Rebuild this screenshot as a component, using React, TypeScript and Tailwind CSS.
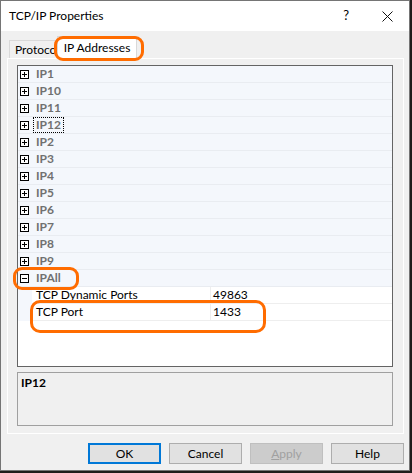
const categories = ["IP1", "IP10", "IP11", "IP12", "IP2", "IP3", "IP4", "IP5", "IP6", "IP7", "IP8", "IP9"];

const props = [
  { name: "TCP Dynamic Ports", value: "49863" },
  { name: "TCP Port", value: "1433" },
];

function ExpandBox({ open }: { open?: boolean }) {
  return (
    <svg width="9" height="9" viewBox="0 0 9 9" className="shrink-0">
      <rect x="0.5" y="0.5" width="8" height="8" fill="white" stroke="#000" />
      <line x1="2" y1="4.5" x2="7" y2="4.5" stroke="#000" />
      {!open && <line x1="4.5" y1="2" x2="4.5" y2="7" stroke="#000" />}
    </svg>
  );
}

function CategoryRow({ label, open, focused }: { label: string; open?: boolean; focused?: boolean }) {
  return (
    <div className="h-[17px] flex items-center bg-[#f4f7fc] border-b border-[#e9ecf1]">
      <div className="w-[14px] pl-[2px] flex items-center">
        <ExpandBox open={open} />
      </div>
      <span
        className={
          "ml-[1px] px-[2px] leading-[14px] font-bold text-[#707070] border " +
          (focused ? "border-dotted border-black" : "border-transparent")
        }
      >
        {label}
      </span>
    </div>
  );
}

function PropRow({ name, value }: { name: string; value: string }) {
  return (
    <div className="h-[17px] flex">
      <div className="w-[14px] bg-[#f4f7fc]" />
      <div className="flex-1 flex border-b border-[#eeeeee]">
        <div className="w-[179px] pl-[4px] border-r border-[#eeeeee] leading-[16px] text-black">{name}</div>
        <div className="pl-[2px] leading-[16px] text-black">{value}</div>
      </div>
    </div>
  );
}

function Button({ label, primary, disabled }: { label: React.ReactNode; primary?: boolean; disabled?: boolean }) {
  return (
    <div
      className={
        "w-[73px] h-[21px] flex items-center justify-center " +
        (primary
          ? "border-2 border-[#0078d7] bg-[#e1e1e1] text-black"
          : disabled
          ? "border border-[#bfbfbf] bg-[#cccccc] text-[#a0a0a0]"
          : "border border-[#adadad] bg-[#e1e1e1] text-black")
      }
    >
      {label}
    </div>
  );
}

export default function App() {
  return (
    <div
      className="relative w-[412px] h-[473px] bg-[#1f1d1c] overflow-hidden text-[12px]"
      style={{ fontFamily: '"Segoe UI", Lato, "Noto Sans", sans-serif' }}
    >
      <div className="w-[410px] h-[471px] border border-[#757575] bg-[#f0f0f0] flex flex-col">
        {/* title bar */}
        <div className="h-[30px] bg-white flex items-center">
          <span className="pl-[8px] text-black text-[12px]">TCP/IP Properties</span>
          <span className="ml-auto mr-[33px] text-black text-[13px]">?</span>
          <svg width="11" height="11" viewBox="0 0 11 11" className="mr-[16px]">
            <line x1="0.5" y1="0.5" x2="10.5" y2="10.5" stroke="#111" strokeWidth="1" />
            <line x1="10.5" y1="0.5" x2="0.5" y2="10.5" stroke="#111" strokeWidth="1" />
          </svg>
        </div>

        {/* tabs */}
        <div className="mt-[5px] ml-[8px] h-[22px] flex items-end">
          <div className="h-[18px] w-[52px] pl-[5px] border border-b-0 border-[#d9d9d9] bg-[#f0f0f0] leading-[17px] text-black overflow-hidden whitespace-nowrap">
            Protocol
          </div>
          <div className="relative z-10 -ml-[4px] h-[22px] w-[80px] border border-b-0 border-[#d9d9d9] bg-white flex items-center justify-center text-black">
            IP Addresses
          </div>
        </div>

        {/* tab panel */}
        <div className="ml-[6px] w-[397px] h-[376px] border border-white pt-[6px] pl-[9px] pr-[10px] flex flex-col">
          <div className="h-[302px] border border-[#646464] bg-white flex flex-col">
            {categories.map((c) => (
              <CategoryRow key={c} label={c} focused={c === "IP12"} />
            ))}
            <CategoryRow label="IPAll" open />
            {props.map((p) => (
              <PropRow key={p.name} name={p.name} value={p.value} />
            ))}
          </div>
          <div className="mt-[5px] h-[54px] border border-[#a0a0a0] bg-[#f0f0f0] pl-[3px] pt-[1px]">
            <span className="font-bold text-black">IP12</span>
          </div>
        </div>

        {/* buttons */}
        <div className="mt-[9px] pr-[5px] flex justify-end gap-[8px]">
          <Button label="OK" primary />
          <Button label="Cancel" />
          <Button label={<span><span className="underline">A</span>pply</span>} disabled />
          <Button label="Help" />
        </div>
      </div>

      {/* annotation highlights */}
      <div className="absolute left-[54px] top-[36px] w-[90px] h-[25px] border-[3px] border-[#ff6c00] rounded-[9px] z-20" />
      <div className="absolute left-[13px] top-[267px] w-[66px] h-[23px] border-[3px] border-[#ff6c00] rounded-[9px] z-20" />
      <div className="absolute left-[30px] top-[300px] w-[236px] h-[33px] border-[3px] border-[#ff6c00] rounded-[10px] z-20" />
    </div>
  );
}
